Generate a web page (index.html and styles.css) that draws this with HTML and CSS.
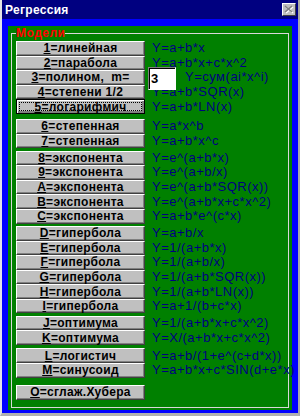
FILE: index.html
```html
<!DOCTYPE html>
<html lang="ru">
<head>
  <meta charset="UTF-8">
  <meta name="viewport" content="width=device-width, initial-scale=1.0">
  <title>Регрессия</title>
  <link rel="stylesheet" href="styles.css">
</head>
<body>
  <div class="window">
    <div class="titlebar">
      <span class="title">Регрессия</span>
      <span class="close">
        <svg width="12" height="11" viewBox="0 0 12 11">
          <path d="M3 3 L10 9 M10 3 L3 9" stroke="#fff" stroke-width="1.5"/>
          <path d="M2 2 L9 8 M9 2 L2 8" stroke="#808080" stroke-width="1.5"/>
        </svg>
      </span>
    </div>
    <div class="client">
      <div class="panel">
        <fieldset class="models">
          <legend>Модели</legend>

          <div class="group">
            <div class="row"><button class="btn"><u>1</u>=линейная</button><span class="formula">Y=a+b*x</span></div>
            <div class="row"><button class="btn"><u>2</u>=парабола</button><span class="formula">Y=a+b*x+c*x^2</span></div>
            <div class="row">
              <button class="btn"><u>3</u>=полином,&nbsp; m=</button>
              <input class="num" type="text" value="3">
              <span class="formula poly">Y=сум(ai*x^i)</span>
            </div>
            <div class="row"><button class="btn"><u>4</u>=степени 1/2</button><span class="formula">Y=a+b*SQR(x)</span></div>
            <div class="row"><button class="btn focus"><u>5</u>=логарифмич</button><span class="formula">Y=a+b*LN(x)</span></div>
          </div>

          <div class="group wide">
            <div class="row"><button class="btn"><u>6</u>=степенная</button><span class="formula">Y=a*x^b</span></div>
            <div class="row"><button class="btn"><u>7</u>=степенная</button><span class="formula">Y=a+b*x^c</span></div>
          </div>

          <div class="group">
            <div class="row"><button class="btn"><u>8</u>=экспонента</button><span class="formula">Y=e^(a+b*x)</span></div>
            <div class="row"><button class="btn"><u>9</u>=экспонента</button><span class="formula">Y=e^(a+b/x)</span></div>
            <div class="row"><button class="btn"><u>A</u>=экспонента</button><span class="formula">Y=e^(a+b*SQR(x))</span></div>
            <div class="row"><button class="btn"><u>B</u>=экспонента</button><span class="formula">Y=e^(a+b*x+c*x^2)</span></div>
            <div class="row"><button class="btn"><u>C</u>=экспонента</button><span class="formula">Y=a+b*e^(c*x)</span></div>
          </div>

          <div class="group">
            <div class="row"><button class="btn"><u>D</u>=гипербола</button><span class="formula">Y=a+b/x</span></div>
            <div class="row"><button class="btn"><u>E</u>=гипербола</button><span class="formula">Y=1/(a+b*x)</span></div>
            <div class="row"><button class="btn"><u>F</u>=гипербола</button><span class="formula">Y=1/(a+b/x)</span></div>
            <div class="row"><button class="btn"><u>G</u>=гипербола</button><span class="formula">Y=1/(a+b*SQR(x))</span></div>
            <div class="row"><button class="btn"><u>H</u>=гипербола</button><span class="formula">Y=1/(a+b*LN(x))</span></div>
            <div class="row"><button class="btn"><u>I</u>=гипербола</button><span class="formula">Y=a+1/(b+c*x)</span></div>
          </div>

          <div class="group">
            <div class="row"><button class="btn"><u>J</u>=оптимума</button><span class="formula">Y=1/(a+b*x+c*x^2)</span></div>
            <div class="row"><button class="btn"><u>K</u>=оптимума</button><span class="formula">Y=X/(a+b*x+c*x^2)</span></div>
          </div>

          <div class="group mid">
            <div class="row"><button class="btn"><u>L</u>=логистич</button><span class="formula">Y=a+b/(1+e^(c+d*x))</span></div>
            <div class="row"><button class="btn"><u>M</u>=синусоид</button><span class="formula">Y=a+b*x+c*SIN(d+e*x)</span></div>
          </div>

          <div class="group last">
            <div class="row"><button class="btn"><u>O</u>=сглаж.Хубера</button></div>
          </div>
        </fieldset>
      </div>
    </div>
  </div>
</body>
</html>
```

FILE: styles.css
```css
body {
  margin: 0;
  padding: 0;
  background-color: #c0c0c0;
  font-family: "Liberation Sans", Arial, sans-serif;
  overflow: hidden;
}

.window {
  width: 300px;
  height: 416px;
  box-sizing: border-box;
  display: flex;
  flex-direction: column;
  border-left: 2px solid #e4e4e4;
  border-right: 2px solid #a8a8a8;
  border-bottom: 3px solid #b0b0b0;
}

.titlebar {
  height: 19px;
  flex-shrink: 0;
  background-color: #000080;
  display: flex;
  align-items: center;
  justify-content: space-between;
  padding: 0 2px 0 3px;
}

.title {
  color: #fff;
  font-weight: bold;
  font-size: 12px;
  letter-spacing: 0.3px;
}

.close {
  width: 14px;
  height: 13px;
  box-sizing: border-box;
  background-color: #c0c0c0;
  border: 1px solid;
  border-color: #fff #404040 #404040 #fff;
  display: flex;
  align-items: center;
  justify-content: center;
}

.client {
  flex: 1;
  display: flex;
  flex-direction: column;
  background-color: #0000ff;
  padding: 7px 6px 3px 6px;
}

.panel {
  flex: 1;
  display: flex;
  flex-direction: column;
  background-color: #008000;
  padding: 0 3px 2px 3px;
}

.models {
  flex: 1;
  margin: 0;
  padding: 1px 4px 0 4px;
  border: 1px solid #d8d8d8;
  min-width: 0;
}

.models legend {
  padding: 0;
  color: #ff0000;
  font-weight: bold;
  font-size: 12px;
  line-height: 14px;
  letter-spacing: 0.5px;
}

.group {
  margin-top: 2.4px;
}

.group:first-of-type {
  margin-top: 0;
}

.group.wide {
  margin-top: 5px;
}

.group.mid {
  margin-top: 3.4px;
}

.group.last {
  margin-top: 7.4px;
}

.row {
  display: flex;
  align-items: center;
  height: 14.6px;
}

.btn {
  width: 129px;
  height: 100%;
  flex-shrink: 0;
  box-sizing: border-box;
  padding: 0;
  margin: 0;
  background-color: #c0c0c0;
  border: 1px solid;
  border-color: #fff #404040 #404040 #fff;
  box-shadow: inset -1px -1px #808080;
  color: #000;
  font-family: "Liberation Sans", Arial, sans-serif;
  font-weight: bold;
  font-size: 12px;
  line-height: 12px;
  letter-spacing: 0.3px;
  white-space: nowrap;
}

.btn.focus {
  border-color: #000;
  box-shadow: inset 1px 1px #fff, inset -2px -2px #808080;
  outline: 1px dotted #000;
  outline-offset: -4px;
}

.formula {
  margin-left: 7px;
  color: #000080;
  font-size: 13px;
  line-height: 14px;
  letter-spacing: 0.5px;
  white-space: nowrap;
}

.formula.poly {
  margin-left: 9px;
}

.num {
  position: relative;
  z-index: 1;
  align-self: flex-start;
  width: 28px;
  height: 23px;
  box-sizing: border-box;
  margin: -3px 0 0 3px;
  padding: 0 0 0 2px;
  background-color: #fff;
  border: 1px solid;
  border-color: #808080 #fff #fff #808080;
  box-shadow: inset 1px 1px #000;
  color: #000;
  font-family: "Liberation Sans", Arial, sans-serif;
  font-weight: bold;
  font-size: 13px;
}
```
